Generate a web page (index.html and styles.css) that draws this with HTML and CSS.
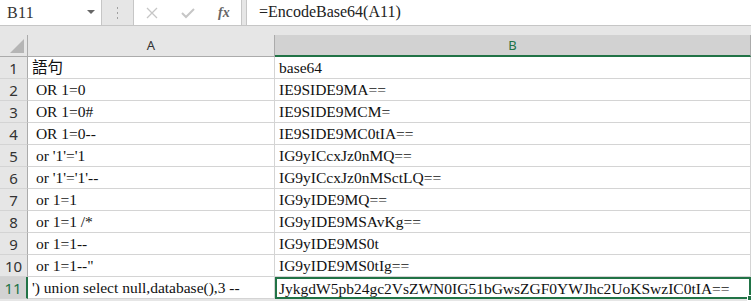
FILE: index.html
```html
<!DOCTYPE html>
<html lang="zh-Hant">
  <head>
    <meta charset="UTF-8" />
    <title>EncodeBase64</title>
    <link rel="stylesheet" href="styles.css">
  </head>
  <body>
    <div class="formula-bar">
      <div class="name-box">
        <span class="name">B11</span>
        <span class="drop"></span>
      </div>
      <div class="grip">
        <svg width="3" height="12" viewBox="0 0 3 12"><rect x="1" y="0" width="1" height="2" fill="#a0a0a0"/><rect x="1" y="5" width="1" height="2" fill="#a0a0a0"/><rect x="1" y="10" width="1" height="2" fill="#a0a0a0"/></svg>
      </div>
      <div class="buttons">
        <svg class="btn" width="14" height="14" viewBox="0 0 14 14"><path d="M2 2 L12 12 M12 2 L2 12" stroke="#c6c6c6" stroke-width="1.3" fill="none"/></svg>
        <svg class="btn" width="16" height="14" viewBox="0 0 16 14"><path d="M2 7 L6 11 L14 3" stroke="#c6c6c6" stroke-width="2" fill="none"/></svg>
        <span class="fx">fx</span>
      </div>
      <div class="formula">=EncodeBase64(A11)</div>
    </div>

    <div class="sheet">
      <div class="corner"><span class="tri"></span></div>
      <div class="col-head">A</div>
      <div class="col-head sel">B</div>

      <div class="row-head">1</div><div class="cell">語句</div><div class="cell">base64</div>
      <div class="row-head">2</div><div class="cell">&nbsp;OR 1=0</div><div class="cell">IE9SIDE9MA==</div>
      <div class="row-head">3</div><div class="cell">&nbsp;OR 1=0#</div><div class="cell">IE9SIDE9MCM=</div>
      <div class="row-head">4</div><div class="cell">&nbsp;OR 1=0--</div><div class="cell">IE9SIDE9MC0tIA==</div>
      <div class="row-head">5</div><div class="cell">&nbsp;or '1'='1</div><div class="cell">IG9yICcxJz0nMQ==</div>
      <div class="row-head">6</div><div class="cell">&nbsp;or '1'='1'--</div><div class="cell">IG9yICcxJz0nMSctLQ==</div>
      <div class="row-head">7</div><div class="cell">&nbsp;or 1=1</div><div class="cell">IG9yIDE9MQ==</div>
      <div class="row-head">8</div><div class="cell">&nbsp;or 1=1 /*</div><div class="cell">IG9yIDE9MSAvKg==</div>
      <div class="row-head">9</div><div class="cell">&nbsp;or 1=1--</div><div class="cell">IG9yIDE9MS0t</div>
      <div class="row-head">10</div><div class="cell">&nbsp;or 1=1--"</div><div class="cell">IG9yIDE9MS0tIg==</div>
      <div class="row-head sel">11</div><div class="cell">') union select null,database(),3 --</div><div class="cell active">JykgdW5pb24gc2VsZWN0IG51bGwsZGF0YWJhc2UoKSwzIC0tIA==<span class="handle"></span></div>
    </div>
  </body>
</html>
```

FILE: styles.css
```css
* {
  margin: 0;
  padding: 0;
  box-sizing: border-box;
}

body {
  width: 751px;
  height: 301px;
  overflow: hidden;
  background: #e6e6e6;
  font-family: "Liberation Serif", "Noto Sans CJK TC", serif;
}

/* formula bar */
.formula-bar {
  display: flex;
  height: 26px;
  border-bottom: 1px solid #c6c6c6;
}

.name-box {
  width: 102px;
  background: #fff;
  border-right: 1px solid #c6c6c6;
  display: flex;
  align-items: center;
  justify-content: space-between;
  padding: 0 6px 0 7px;
}

.name {
  font-size: 16px;
  color: #333;
  letter-spacing: 0.3px;
}

.drop {
  width: 0;
  height: 0;
  border-left: 4px solid transparent;
  border-right: 4px solid transparent;
  border-top: 4px solid #666;
  margin-top: -2px;
}

.grip {
  width: 31px;
  display: flex;
  align-items: center;
  justify-content: center;
}

.buttons {
  width: 109px;
  background: #fff;
  border-left: 1px solid #c6c6c6;
  border-right: 1px solid #c6c6c6;
  display: flex;
  align-items: center;
  padding-left: 11px;
  gap: 21px;
}

.fx {
  font-family: "Liberation Serif", serif;
  font-style: italic;
  font-weight: bold;
  font-size: 14px;
  color: #666;
  margin-left: 1px;
}

.formula {
  flex: 1;
  margin-left: 4px;
  background: #fff;
  border-left: 1px solid #c6c6c6;
  font-size: 16px;
  color: #222;
  padding: 3px 0 0 12px;
}

/* sheet grid */
.sheet {
  margin-top: 9px;
  display: grid;
  grid-template-columns: 28px 247px 1fr;
  grid-auto-rows: 22px;
}

.corner {
  position: relative;
  border-right: 1px solid #ababab;
  border-bottom: 1px solid #ababab;
}

.tri {
  position: absolute;
  right: 3px;
  bottom: 3px;
  width: 0;
  height: 0;
  border-left: 14px solid transparent;
  border-bottom: 14px solid #b5b5b5;
}

.col-head {
  font-family: "Noto Sans", sans-serif;
  font-size: 13px;
  color: #333;
  text-align: center;
  line-height: 21px;
  border-right: 1px solid #ababab;
  border-bottom: 1px solid #ababab;
}

.col-head.sel {
  background: #d2d2d2;
  color: #217346;
  border-bottom: 2px solid #217346;
  line-height: 20px;
}

.row-head {
  font-family: "Noto Sans", sans-serif;
  font-size: 15px;
  color: #333;
  text-align: center;
  line-height: 22px;
  border-right: 1px solid #ababab;
  border-bottom: 1px solid #d4d4d4;
}

.row-head.sel {
  background: #d2d2d2;
  color: #217346;
  border-right: 2px solid #217346;
}

.cell {
  position: relative;
  background: #fff;
  font-size: 15.5px;
  color: #111;
  line-height: 22px;
  padding-left: 4px;
  white-space: pre;
  overflow: visible;
  border-right: 1px solid #d4d4d4;
  border-bottom: 1px solid #d4d4d4;
}

.cell.active {
  border: 2px solid #217346;
  line-height: 19px;
  padding-left: 2px;
}

.handle {
  position: absolute;
  right: -4px;
  bottom: -4px;
  width: 6px;
  height: 6px;
  background: #217346;
  border: 1px solid #fff;
}
```
